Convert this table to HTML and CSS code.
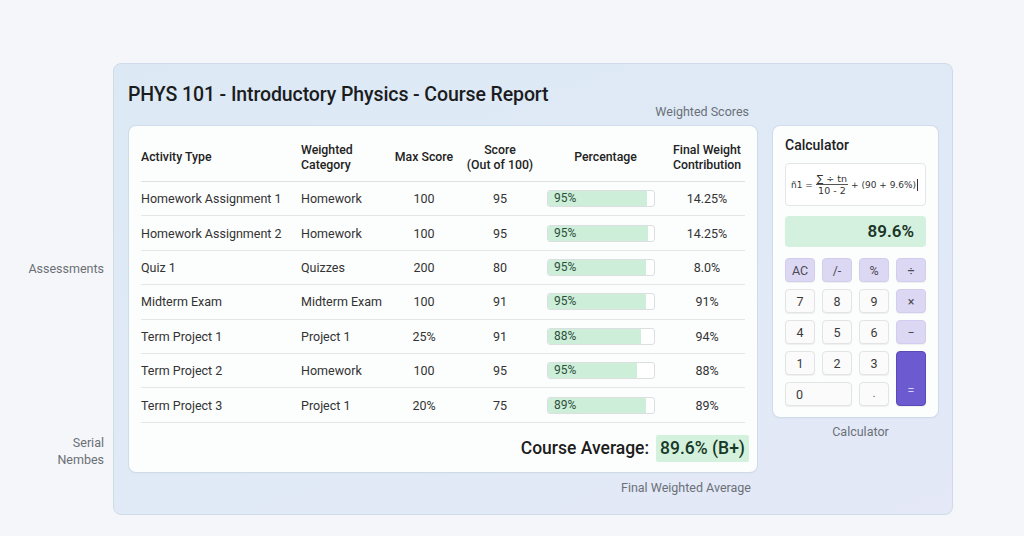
FILE: index.html
```html
<!DOCTYPE html>
<html>
<head>
<meta charset="utf-8">
<link rel="stylesheet" href="styles.css">
</head>
<body>
<div class="page">
  <div class="side">
    <div class="side-label assess">Assessments</div>
    <div class="side-label serial">Serial<br>Nembes</div>
  </div>
  <div class="panel">
    <h1 class="title">PHYS 101 - Introductory Physics - Course Report</h1>
    <div class="content">
      <div class="main-col">
        <div class="cap cap-top">Weighted Scores</div>
        <div class="card table-card">
          <div class="trow thead">
            <div class="c c1">Activity Type</div>
            <div class="c c2">Weighted<br>Category</div>
            <div class="c c3">Max Score</div>
            <div class="c c4">Score<br>(Out of 100)</div>
            <div class="c c5h">Percentage</div>
            <div class="c c6">Final Weight<br>Contribution</div>
          </div>
          <div class="trow">
            <div class="c c1">Homework Assignment 1</div><div class="c c2">Homework</div><div class="c c3">100</div><div class="c c4">95</div>
            <div class="c c5"><div class="bar"><div class="fill" style="width:93%"></div><span>95%</span></div></div><div class="c c6">14.25%</div>
          </div>
          <div class="trow">
            <div class="c c1">Homework Assignment 2</div><div class="c c2">Homework</div><div class="c c3">100</div><div class="c c4">95</div>
            <div class="c c5"><div class="bar"><div class="fill" style="width:94%"></div><span>95%</span></div></div><div class="c c6">14.25%</div>
          </div>
          <div class="trow">
            <div class="c c1">Quiz 1</div><div class="c c2">Quizzes</div><div class="c c3">200</div><div class="c c4">80</div>
            <div class="c c5"><div class="bar"><div class="fill" style="width:92%"></div><span>95%</span></div></div><div class="c c6">8.0%</div>
          </div>
          <div class="trow">
            <div class="c c1">Midterm Exam</div><div class="c c2">Midterm Exam</div><div class="c c3">100</div><div class="c c4">91</div>
            <div class="c c5"><div class="bar"><div class="fill" style="width:92%"></div><span>95%</span></div></div><div class="c c6">91%</div>
          </div>
          <div class="trow">
            <div class="c c1">Term Project 1</div><div class="c c2">Project 1</div><div class="c c3">25%</div><div class="c c4">91</div>
            <div class="c c5"><div class="bar"><div class="fill" style="width:88%"></div><span>88%</span></div></div><div class="c c6">94%</div>
          </div>
          <div class="trow">
            <div class="c c1">Term Project 2</div><div class="c c2">Homework</div><div class="c c3">100</div><div class="c c4">95</div>
            <div class="c c5"><div class="bar"><div class="fill" style="width:84%"></div><span>95%</span></div></div><div class="c c6">88%</div>
          </div>
          <div class="trow">
            <div class="c c1">Term Project 3</div><div class="c c2">Project 1</div><div class="c c3">20%</div><div class="c c4">75</div>
            <div class="c c5"><div class="bar"><div class="fill" style="width:92%"></div><span>89%</span></div></div><div class="c c6">89%</div>
          </div>
          <div class="avg-row">
            <span class="avg-label">Course Average:</span>
            <span class="avg-value">89.6% (B+)</span>
          </div>
        </div>
        <div class="cap cap-bottom">Final Weighted Average</div>
      </div>
      <div class="calc-col">
        <div class="card calc-card">
          <div class="calc-title">Calculator</div>
          <div class="formula">
            <span>ñ1 =</span>
            <span class="frac"><span class="num">∑ ÷ tn</span><span class="den">10 - 2</span></span>
            <span>+ (90 + 9.6%)</span><span class="cursor"></span>
          </div>
          <div class="display">89.6%</div>
          <div class="keys">
            <div class="key op">AC</div>
            <div class="key op">/-</div>
            <div class="key op">%</div>
            <div class="key op">÷</div>
            <div class="key">7</div>
            <div class="key">8</div>
            <div class="key">9</div>
            <div class="key op">×</div>
            <div class="key">4</div>
            <div class="key">5</div>
            <div class="key">6</div>
            <div class="key op">−</div>
            <div class="key">1</div>
            <div class="key">2</div>
            <div class="key">3</div>
            <div class="key eq">=</div>
            <div class="key zero">0</div>
            <div class="key dot">.</div>
          </div>
        </div>
        <div class="cap cap-calc">Calculator</div>
      </div>
    </div>
  </div>
</div>
</body>
</html>
```
FILE: styles.css
```css
* { box-sizing: border-box; }
html, body { margin: 0; padding: 0; }
body {
  background: #f5f6fa;
  font-family: Roboto, "Liberation Sans", Arial, sans-serif;
  color: #2b2b2b;
  width: 1024px;
  height: 536px;
  overflow: hidden;
}
.page {
  display: flex;
  padding-top: 63px;
  gap: 9px;
}
.side {
  width: 104px;
  display: flex;
  flex-direction: column;
  align-items: flex-end;
  text-align: right;
}
.side-label {
  font-size: 12.5px;
  line-height: 17px;
  color: #6a6f75;
}
.assess { margin-top: 197px; }
.serial { margin-top: 157px; }

.panel {
  width: 840px;
  height: 452px;
  border-radius: 8px;
  border: 1px solid #cfdbe8;
  background: linear-gradient(160deg, #dce9f5 0%, #e0eaf6 55%, #e4e8f7 100%);
  padding: 19px 14px 0 15px;
}
.title {
  margin: 0 0 0 -1px;
  font-size: 19.5px;
  line-height: 24px;
  font-weight: 500;
  color: #1b1c1e;
  letter-spacing: -0.1px;
}
.content {
  display: flex;
  gap: 16px;
}
.main-col {
  width: 628px;
  flex: none;
  display: flex;
  flex-direction: column;
}
.cap {
  font-size: 12.5px;
  line-height: 16px;
  color: #6b7078;
}
.cap-top {
  margin-top: -3px;
  margin-bottom: 6px;
  text-align: right;
  padding-right: 8px;
}
.cap-bottom {
  margin-top: 8px;
  text-align: right;
  padding-right: 6px;
}
.card {
  background: #fcfdfd;
  border-radius: 7px;
  box-shadow: 0 0 0 1px rgba(200, 214, 228, 0.6), 0 1px 3px rgba(100, 120, 150, 0.08);
}
.table-card {
  height: 346px;
  padding: 8px 10px 0 12px;
}
.trow {
  display: grid;
  grid-template-columns: 160px 89px 68px 84px 127px 76px;
  height: 34.4px;
  align-items: center;
  border-bottom: 1px solid #e4e6e9;
  font-size: 12.5px;
  color: #333;
  width: 604px;
}
.trow.thead {
  height: 48px;
  font-weight: 500;
  font-size: 12.3px;
  line-height: 14.5px;
  color: #222;
  border-bottom: 1.5px solid #dfe2e5;
}
.c { white-space: nowrap; }
.c3, .c4, .c6, .c5h { text-align: center; }
.c5 { padding-left: 5px; }
.bar {
  position: relative;
  width: 108px;
  height: 17px;
  border: 1px solid #dcdfe2;
  border-radius: 3px;
  background: #fff;
  overflow: hidden;
}
.fill {
  height: 100%;
  background: #cdeed9;
}
.bar span {
  position: absolute;
  left: 6px;
  top: 0;
  line-height: 15px;
  font-size: 12px;
  color: #2c4f3a;
}
.avg-row {
  display: flex;
  justify-content: flex-end;
  align-items: center;
  gap: 7px;
  margin-top: 12px;
  font-size: 17.5px;
  font-weight: 500;
  color: #1c1c1c;
}
.avg-value {
  background: #d3f1dd;
  color: #173826;
  height: 27px;
  line-height: 27px;
  padding: 0 4px 0 4px;
  border-radius: 2px;
  margin-right: -2px;
}

.calc-col {
  width: 165px;
  flex: none;
  margin-top: 19px;
  display: flex;
  flex-direction: column;
}
.calc-card {
  height: 291px;
  padding: 10px 12px 12px 12px;
}
.calc-title {
  font-size: 14px;
  line-height: 18px;
  font-weight: 500;
  color: #202124;
}
.formula {
  margin-top: 9px;
  height: 43px;
  background: #fff;
  border: 1px solid #e3e5e8;
  border-radius: 4px;
  display: flex;
  align-items: center;
  gap: 3px;
  padding: 0 3px 0 5px;
  font-family: "DejaVu Sans", sans-serif;
  font-size: 9px;
  color: #333;
  white-space: nowrap;
}
.frac {
  display: inline-flex;
  flex-direction: column;
  align-items: center;
  line-height: 11px;
  font-size: 9.5px;
}
.frac .num { border-bottom: 1px solid #555; padding: 0 1px; }
.cursor {
  width: 1px;
  height: 12px;
  background: #333;
  margin-left: -2px;
}
.display {
  margin-top: 10px;
  height: 31px;
  background: #d3f1de;
  border-radius: 4px;
  text-align: right;
  padding-right: 12px;
  line-height: 31px;
  font-size: 17px;
  font-weight: 600;
  color: #1d3528;
}
.keys {
  margin-top: 11px;
  display: grid;
  grid-template-columns: repeat(4, 30px);
  grid-template-rows: repeat(5, 24px);
  gap: 7px;
}
.key {
  background: #fbfbfb;
  border: 1px solid #e4e4e6;
  border-radius: 4px;
  box-shadow: 0 1px 1px rgba(0,0,0,0.06);
  display: flex;
  align-items: center;
  justify-content: center;
  font-size: 12.5px;
  color: #3a3a3a;
}
.key.op {
  background: #dcd8f3;
  border-color: #d2cdee;
  color: #4a4a55;
}
.key.eq {
  grid-column: 4;
  grid-row: 4 / span 2;
  background: #6c5bd0;
  border-color: #5a4ab8;
  color: #d8d2ff;
  align-items: flex-end;
  padding-bottom: 7px;
}
.key.zero {
  grid-column: 1 / span 2;
  justify-content: flex-start;
  padding-left: 10px;
}
.key.dot {
  grid-column: 3;
  align-items: flex-end;
  padding-bottom: 6px;
  font-size: 10px;
}
.cap-calc {
  margin-top: 7px;
  text-align: center;
  padding-left: 10px;
}
```
